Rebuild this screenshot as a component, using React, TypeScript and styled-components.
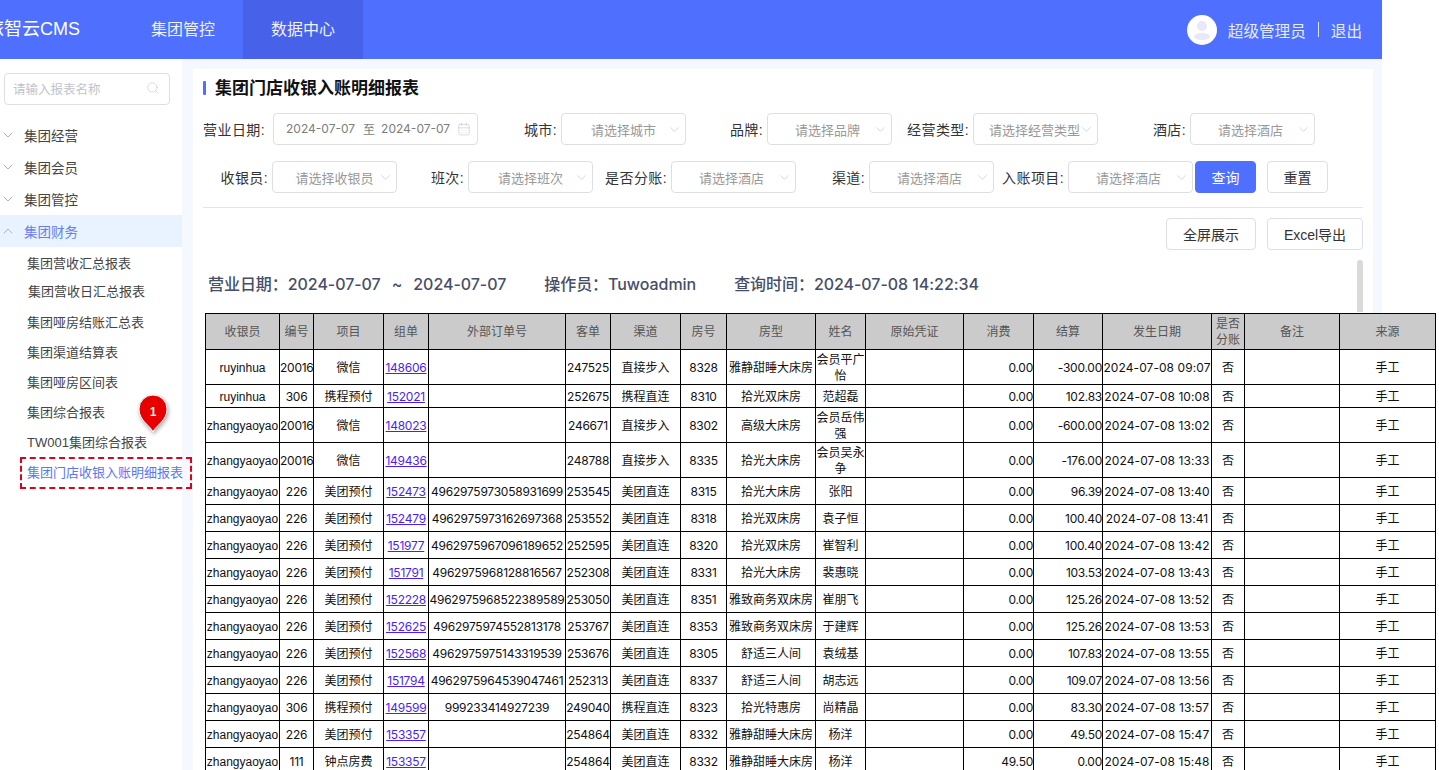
import React from 'react';
import styled, {createGlobalStyle} from 'styled-components';
import {CalendarDays, ChevronDown, ChevronUp, Search} from 'lucide-react';

const sans = `"Liberation Sans", "Noto Sans CJK SC", sans-serif`;
const blue = '#4f6fff';

const GlobalStyle = createGlobalStyle`
  html, body {
    margin: 0;
    height: 770px;
    overflow: hidden;
    background: #fff;
    font-family: ${sans};
  }
`;

const Shell = styled.div`
  width: 1382px;
  height: 770px;
  display: flex;
  flex-direction: column;
`;

const TopBar = styled.header`
  height: 59px;
  flex: none;
  background: ${blue};
  display: flex;
  align-items: center;
  color: #fff;
  padding-right: 20px;
`;
const Brand = styled.div`
  width: 137px;
  margin-left: -14px;
  font-size: 18px;
  white-space: nowrap;
  line-height: 59px;
`;
const NavItem = styled.div<{$active?: boolean}>`
  width: 120px;
  height: 59px;
  line-height: 60px;
  text-align: center;
  font-size: 16px;
  color: #eef1ff;
  background: ${p => (p.$active ? '#4761e8' : 'transparent')};
`;
const UserArea = styled.div`
  margin-left: auto;
  display: flex;
  align-items: center;
  font-size: 15.6px;
  color: #e6eaff;
`;
const Avatar = styled.svg`
  width: 30px;
  height: 30px;
  margin-right: 11px;
`;
const Sep = styled.span`
  width: 1px;
  height: 15px;
  background: #dfe4ff;
  margin: 0 12px;
`;

const Main = styled.div`
  flex: 1;
  display: flex;
  background: #f5f8ff;
  min-height: 0;
`;

const Sidebar = styled.aside`
  width: 182px;
  flex: none;
  background: #fff;
  padding-top: 14px;
  box-sizing: border-box;
  position: relative;
`;
const SearchBox = styled.div`
  width: 166px;
  height: 32px;
  margin: 0 0 14px 4px;
  box-sizing: border-box;
  border: 1px solid #dcdfe6;
  border-radius: 4px;
  display: flex;
  align-items: center;
  justify-content: space-between;
  padding: 0 9px 2px 8px;
  font-size: 12.5px;
  color: #c0c4cc;
`;
const Group = styled.div<{$open?: boolean}>`
  height: 32px;
  display: flex;
  align-items: center;
  font-size: 13.5px;
  margin-bottom: ${p => (p.$open ? 2 : 0)}px;
  color: ${p => (p.$open ? '#6480f5' : '#444')};
  background: ${p => (p.$open ? '#e9f3ff' : 'transparent')};
  svg {
    margin-right: 8px;
    color: ${p => (p.$open ? '#8ba0f7' : '#999')};
  }
`;
const SubItem = styled.div<{$top?: number; $left?: number}>`
  height: 30px;
  line-height: 30px;
  font-size: 13px;
  white-space: nowrap;
  color: #444;
  margin-top: ${p => p.$top ?? 0}px;
  padding-left: ${p => p.$left ?? 27}px;
`;
const MarkedItem = styled.div`
  width: 172px;
  height: 32px;
  margin: -1px 0 0 20px;
  box-sizing: border-box;
  border: 2px dashed #e0001b;
  padding-left: 5px;
  line-height: 28px;
  font-size: 13px;
  white-space: nowrap;
  color: #5a76f8;
`;
const Pin = styled.div`
  position: absolute;
  left: 137px;
  top: 335px;
  width: 32px;
  height: 40px;
  filter: drop-shadow(1px 2px 2px rgba(0, 0, 0, 0.35));
  svg {
    display: block;
  }
`;
const PinNumber = styled.span`
  position: absolute;
  left: 0;
  right: 0;
  top: 11px;
  text-align: center;
  font-size: 12px;
  font-weight: 700;
  color: #fff;
`;

const Card = styled.section`
  width: 1180px;
  flex: none;
  margin: 10px 0 0 11px;
  padding: 10px 10px 0;
  box-sizing: border-box;
  background: #fff;
  position: relative;
`;
const Title = styled.h1`
  margin: 0;
  height: 20px;
  line-height: 20px;
  font-size: 17px;
  font-weight: 700;
  color: #111;
  padding-left: 12px;
  position: relative;
  white-space: nowrap;
  &::before {
    content: '';
    position: absolute;
    left: 0;
    top: 2px;
    width: 3px;
    height: 14px;
    background: ${blue};
    border-radius: 1px;
  }
`;
const FilterRow = styled.div<{$top: number}>`
  display: flex;
  align-items: center;
  height: 32px;
  margin-top: ${p => p.$top}px;
`;
const FieldLabel = styled.label<{$w: number; $pad?: number}>`
  width: ${p => p.$w}px;
  flex: none;
  box-sizing: border-box;
  padding-right: ${p => p.$pad ?? 4}px;
  text-align: right;
  font-size: 14px;
  letter-spacing: 0.4px;
  color: #333;
  white-space: nowrap;
`;
const DateBox = styled.div`
  width: 205px;
  height: 32px;
  box-sizing: border-box;
  border: 1px solid #dcdfe6;
  border-radius: 4px;
  display: flex;
  align-items: center;
  padding: 0 0 1px 12px;
  font-family: "Inter", "Noto Sans CJK SC", sans-serif;
  font-size: 12px;
  color: #7d7d7d;
  white-space: nowrap;
  svg {
    color: #c0c4cc;
    margin-left: 7px;
  }
`;
const DateTo = styled.span`
  margin: 0 6px 0 8px;
`;
const SelectBox = styled.div`
  width: 125px;
  height: 32px;
  flex: none;
  box-sizing: border-box;
  border: 1px solid #dcdfe6;
  border-radius: 4px;
  position: relative;
  display: flex;
  align-items: center;
  svg {
    position: absolute;
    right: 3px;
    top: 8px;
    color: #bbbfc8;
  }
`;
const SelectText = styled.span<{$tight?: boolean}>`
  flex: 1;
  min-width: 0;
  padding: ${p => (p.$tight ? '0 19px 0 15px' : '0 17px')};
  overflow: hidden;
  text-align: center;
  white-space: nowrap;
  font-size: 13px;
  color: #999;
`;
const Button = styled.button<{$primary?: boolean; $w?: number; $gap?: number}>`
  width: ${p => p.$w ?? 61}px;
  height: 32px;
  flex: none;
  padding: 0;
  margin-left: ${p => p.$gap ?? 0}px;
  box-sizing: border-box;
  border: 1px solid ${p => (p.$primary ? blue : '#dcdfe6')};
  border-radius: 4px;
  background: ${p => (p.$primary ? blue : '#fff')};
  color: ${p => (p.$primary ? '#fff' : '#333')};
  font-family: ${sans};
  font-size: 14px;
`;
const Divider = styled.div`
  height: 1px;
  background: #e2e3ec;
  margin-top: 14px;
`;
const ActionRow = styled.div`
  display: flex;
  justify-content: flex-end;
  align-items: center;
  gap: 11px;
  height: 32px;
  margin-top: 10px;
`;
const Summary = styled.div`
  display: flex;
  gap: 38px;
  height: 24px;
  line-height: 24px;
  margin: 22px 0 0 5px;
  font-family: "Inter", "Noto Sans CJK SC", sans-serif;
  font-size: 16px;
  font-weight: 500;
  letter-spacing: -0.05px;
  color: #474e68;
  white-space: nowrap;
`;
const Tilde = styled.span`
  margin: 0 11px;
`;
const ScrollThumb = styled.div`
  position: absolute;
  left: 1164px;
  top: 191px;
  width: 6px;
  height: 52px;
  background: #d9d9d9;
  border-radius: 3px 3px 0 0;
`;

const Sheet = styled.table`
  table-layout: fixed;
  width: 1230px;
  margin: 17px 0 0 2px;
  border-collapse: collapse;
  font-size: 12px;
  color: #111;
  background: #fff;
  position: relative;
  th, td {
    border: 1px solid #000;
    padding: 1px 0 0;
    text-align: center;
    line-height: 16px;
    background: #fff;
  }
  th {
    height: 35px;
    padding: 0;
    font-weight: 400;
    color: #555;
    background: #cbcbcb;
  }
`;
const Row = styled.tr<{$h: number}>`
  td {
    height: ${p => p.$h}px;
  }
`;
const NumCell = styled.td`
  font-family: "Inter", sans-serif;
  letter-spacing: -0.25px;
  white-space: nowrap;
`;
const DateCell = styled(NumCell)`
  letter-spacing: 0.07px;
`;
const MoneyCell = styled(NumCell)`
  && {
    text-align: right;
  }
`;
const PlainCell = styled.td`
  white-space: nowrap;
`;
const OrderLink = styled.a`
  color: #4c1dfb;
  text-decoration: underline;
`;

const colWidths = [74, 34, 70, 45, 137, 45, 70, 46, 89, 50, 98, 70, 69, 109, 33, 95, 96];
const headers = ['收银员', '编号', '项目', '组单', '外部订单号', '客单', '渠道', '房号', '房型', '姓名', '原始凭证', '消费', '结算', '发生日期', '是否分账', '备注', '来源'];

type Rec = [number, string, string, string, string, string, string, string, string, string, string, string, string, string];

const rows: Rec[] = [
  [33, 'ruyinhua', '20016', '微信', '148606', '', '247525', '直接步入', '8328', '雅静甜睡大床房', '会员平广怡', '0.00', '-300.00', '09:07'],
  [21, 'ruyinhua', '306', '携程预付', '152021', '', '252675', '携程直连', '8310', '拾光双床房', '范超磊', '0.00', '102.83', '10:08'],
  [33, 'zhangyaoyao', '20016', '微信', '148023', '', '246671', '直接步入', '8302', '高级大床房', '会员岳伟强', '0.00', '-600.00', '13:02'],
  [33, 'zhangyaoyao', '20016', '微信', '149436', '', '248788', '直接步入', '8335', '拾光大床房', '会员吴永争', '0.00', '-176.00', '13:33'],
  [25, 'zhangyaoyao', '226', '美团预付', '152473', '4962975973058931699', '253545', '美团直连', '8315', '拾光大床房', '张阳', '0.00', '96.39', '13:40'],
  [25, 'zhangyaoyao', '226', '美团预付', '152479', '4962975973162697368', '253552', '美团直连', '8318', '拾光双床房', '袁子恒', '0.00', '100.40', '13:41'],
  [25, 'zhangyaoyao', '226', '美团预付', '151977', '4962975967096189652', '252595', '美团直连', '8320', '拾光双床房', '崔智利', '0.00', '100.40', '13:42'],
  [25, 'zhangyaoyao', '226', '美团预付', '151791', '4962975968128816567', '252308', '美团直连', '8331', '拾光大床房', '裴惠晓', '0.00', '103.53', '13:43'],
  [25, 'zhangyaoyao', '226', '美团预付', '152228', '4962975968522389589', '253050', '美团直连', '8351', '雅致商务双床房', '崔朋飞', '0.00', '125.26', '13:52'],
  [25, 'zhangyaoyao', '226', '美团预付', '152625', '4962975974552813178', '253767', '美团直连', '8353', '雅致商务双床房', '于建辉', '0.00', '125.26', '13:53'],
  [25, 'zhangyaoyao', '226', '美团预付', '152568', '4962975975143319539', '253676', '美团直连', '8305', '舒适三人间', '袁绒基', '0.00', '107.83', '13:55'],
  [25, 'zhangyaoyao', '226', '美团预付', '151794', '4962975964539047461', '252313', '美团直连', '8337', '舒适三人间', '胡志远', '0.00', '109.07', '13:56'],
  [25, 'zhangyaoyao', '306', '携程预付', '149599', '999233414927239', '249040', '携程直连', '8323', '拾光特惠房', '尚精晶', '0.00', '83.30', '13:57'],
  [25, 'zhangyaoyao', '226', '美团预付', '153357', '', '254864', '美团直连', '8332', '雅静甜睡大床房', '杨洋', '0.00', '49.50', '15:47'],
  [25, 'zhangyaoyao', '111', '钟点房费', '153357', '', '254864', '美团直连', '8332', '雅静甜睡大床房', '杨洋', '49.50', '0.00', '15:48'],
];

function Select({text, tight}: {text: string; tight?: boolean}) {
  return (
    <SelectBox>
      <SelectText $tight={tight}>{text}</SelectText>
      <ChevronDown size={15} strokeWidth={1} />
    </SelectBox>
  );
}

export default function App() {
  return (
    <>
      <GlobalStyle />
      <Shell>
        <TopBar>
          <Brand>旅智云CMS</Brand>
          <NavItem>集团管控</NavItem>
          <NavItem $active>数据中心</NavItem>
          <UserArea>
            <Avatar viewBox="0 0 30 30">
              <circle cx="15" cy="15" r="15" fill="#fff" />
              <circle cx="15" cy="11" r="5" fill="#e8e8f8" />
              <ellipse cx="15" cy="21.5" rx="8" ry="3.5" fill="#e8e8f8" />
            </Avatar>
            超级管理员
            <Sep />
            退出
          </UserArea>
        </TopBar>
        <Main>
          <Sidebar>
            <SearchBox>
              请输入报表名称
              <Search size={14} strokeWidth={1} />
            </SearchBox>
            <Group><ChevronDown size={16} strokeWidth={1.2} />集团经营</Group>
            <Group><ChevronDown size={16} strokeWidth={1.2} />集团会员</Group>
            <Group><ChevronDown size={16} strokeWidth={1.2} />集团管控</Group>
            <Group $open><ChevronUp size={16} strokeWidth={1.2} />集团财务</Group>
            <SubItem>集团营收汇总报表</SubItem>
            <SubItem $top={-2} $left={28}>集团营收日汇总报表</SubItem>
            <SubItem $top={1}>集团哑房结账汇总表</SubItem>
            <SubItem>集团渠道结算表</SubItem>
            <SubItem>集团哑房区间表</SubItem>
            <SubItem>集团综合报表</SubItem>
            <SubItem>TW001集团综合报表</SubItem>
            <MarkedItem>集团门店收银入账明细报表</MarkedItem>
            <Pin>
              <svg width="32" height="40" viewBox="0 0 32 40">
                <path d="M16 38 C14 32 2 27 2 15 A14 14 0 0 1 30 15 C30 27 18 32 16 38 Z" fill="#e60000" stroke="#fff" strokeWidth="1" />
              </svg>
              <PinNumber>1</PinNumber>
            </Pin>
          </Sidebar>
          <Card>
            <Title>集团门店收银入账明细报表</Title>
            <FilterRow $top={14}>
              <FieldLabel $w={70} $pad={8}>营业日期:</FieldLabel>
              <DateBox>
                2024-07-07<DateTo>至</DateTo>2024-07-07
                <CalendarDays size={14} strokeWidth={1} />
              </DateBox>
              <FieldLabel $w={83}>城市:</FieldLabel>
              <Select text="请选择城市" />
              <FieldLabel $w={81}>品牌:</FieldLabel>
              <Select text="请选择品牌" tight />
              <FieldLabel $w={81}>经营类型:</FieldLabel>
              <Select text="请选择经营类型" tight />
              <FieldLabel $w={92}>酒店:</FieldLabel>
              <Select text="请选择酒店" tight />
            </FilterRow>
            <FilterRow $top={16}>
              <FieldLabel $w={69}>收银员:</FieldLabel>
              <Select text="请选择收银员" />
              <FieldLabel $w={71}>班次:</FieldLabel>
              <Select text="请选择班次" />
              <FieldLabel $w={78}>是否分账:</FieldLabel>
              <Select text="请选择酒店" tight />
              <FieldLabel $w={73}>渠道:</FieldLabel>
              <Select text="请选择酒店" tight />
              <FieldLabel $w={74}>入账项目:</FieldLabel>
              <Select text="请选择酒店" tight />
              <Button $primary $gap={2}>查询</Button>
              <Button $gap={11}>重置</Button>
            </FilterRow>
            <Divider />
            <ActionRow>
              <Button $w={90}>全屏展示</Button>
              <Button $w={96}>Excel导出</Button>
            </ActionRow>
            <Summary>
              <span>营业日期：2024-07-07<Tilde>~</Tilde>2024-07-07</span>
              <span>操作员：Tuwoadmin</span>
              <span>查询时间：2024-07-08 14:22:34</span>
            </Summary>
            <ScrollThumb />
            <Sheet>
              <colgroup>
                {colWidths.map((w, i) => <col key={i} width={w} />)}
              </colgroup>
              <thead>
                <tr>
                  {headers.map(h => <th key={h}>{h}</th>)}
                </tr>
              </thead>
              <tbody>
                {rows.map((r, i) => (
                  <Row key={i} $h={r[0]}>
                    <PlainCell>{r[1]}</PlainCell>
                    <NumCell>{r[2]}</NumCell>
                    <td>{r[3]}</td>
                    <NumCell><OrderLink href="#">{r[4]}</OrderLink></NumCell>
                    <NumCell>{r[5]}</NumCell>
                    <NumCell>{r[6]}</NumCell>
                    <td>{r[7]}</td>
                    <NumCell>{r[8]}</NumCell>
                    <td>{r[9]}</td>
                    <td>{r[10]}</td>
                    <td></td>
                    <MoneyCell>{r[11]}</MoneyCell>
                    <MoneyCell>{r[12]}</MoneyCell>
                    <DateCell>2024-07-08 {r[13]}</DateCell>
                    <td>否</td>
                    <td></td>
                    <td>手工</td>
                  </Row>
                ))}
              </tbody>
            </Sheet>
          </Card>
        </Main>
      </Shell>
    </>
  );
}
